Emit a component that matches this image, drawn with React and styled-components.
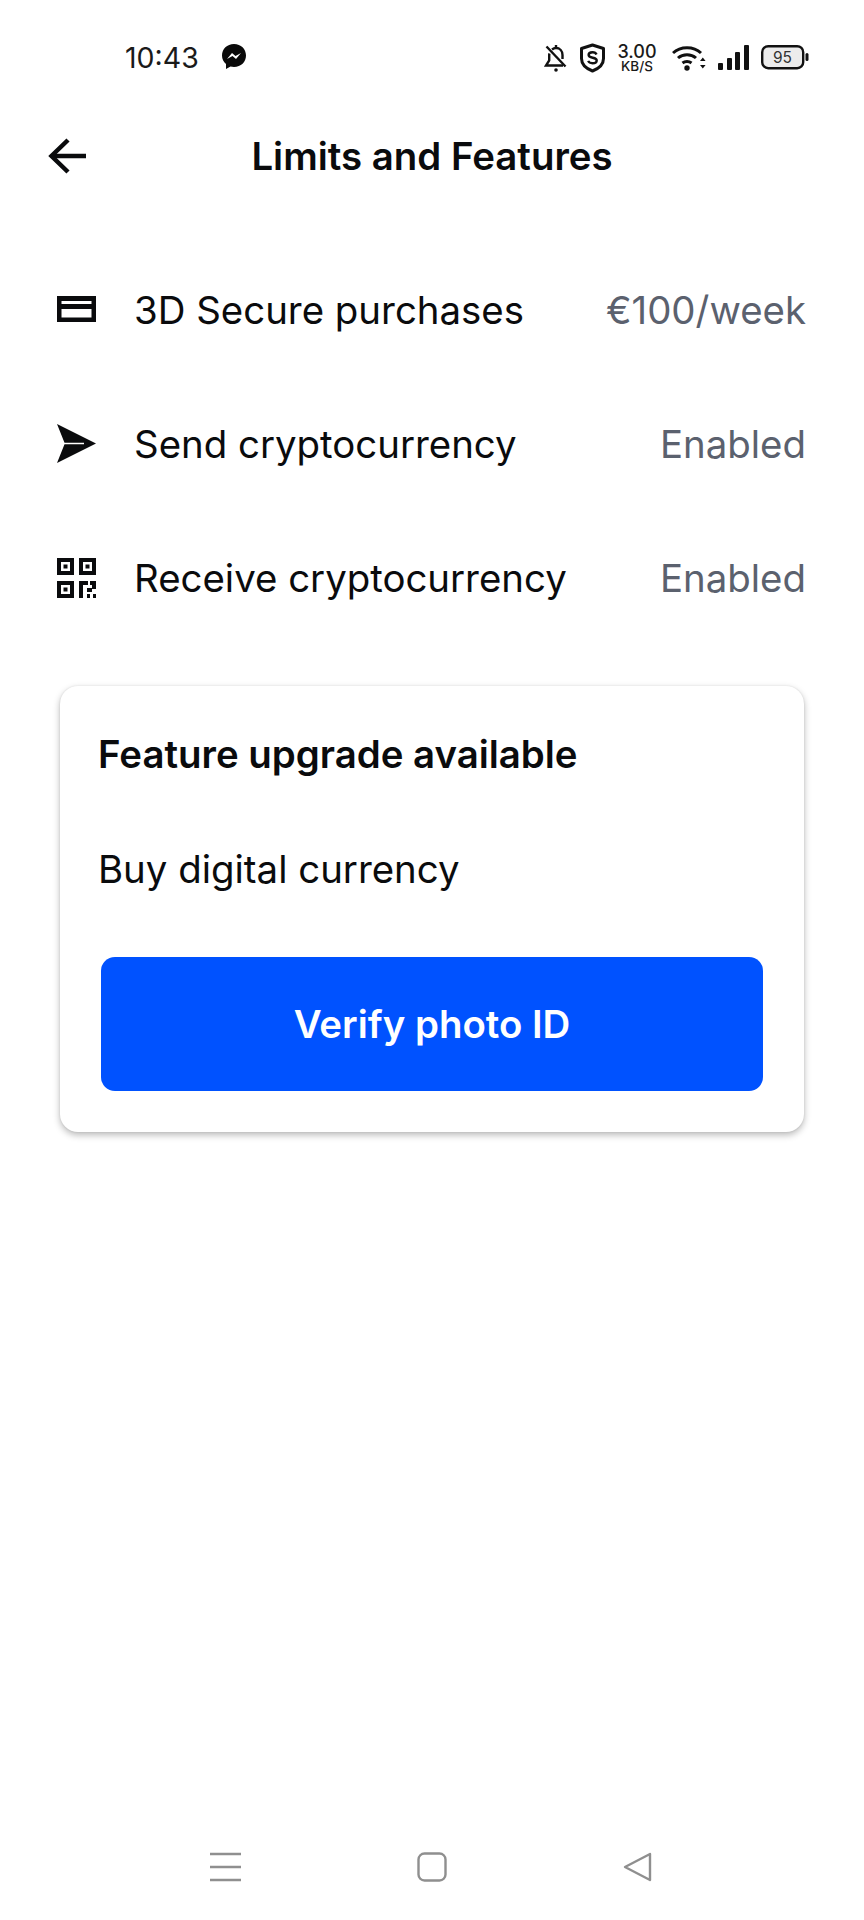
import React from 'react';
import styled, { createGlobalStyle } from 'styled-components';

const GlobalStyle = createGlobalStyle`
  html, body {
    margin: 0;
    padding: 0;
    background: #fff;
  }
  * {
    box-sizing: border-box;
  }
`;

const Page = styled.div`
  display: flex;
  flex-direction: column;
  width: 864px;
  height: 1920px;
  background: #fff;
  color: #0a0b0d;
  font-family: Inter, "Liberation Sans", sans-serif;
`;

const StatusBar = styled.div`
  display: flex;
  align-items: center;
  justify-content: space-between;
  height: 114px;
  padding: 0 55px 0 125px;
`;

const StatusLeft = styled.div`
  display: flex;
  align-items: center;
  gap: 22px;
`;

const Clock = styled.span`
  font-size: 28.5px;
  font-weight: 400;
  color: #1a1a1a;
`;

const StatusRight = styled.div`
  display: flex;
  align-items: center;
  gap: 12px;
  padding-top: 2px;
`;

const Speed = styled.div`
  display: flex;
  flex-direction: column;
  align-items: center;
  width: 40px;
  margin: 0 3px 0 -1px;
  color: #1a1a1a;
  font-weight: 500;
`;

const SpeedValue = styled.span`
  font-size: 18px;
  line-height: 16px;
`;

const SpeedUnit = styled.span`
  font-size: 13.5px;
  line-height: 13px;
`;

const Header = styled.header`
  display: flex;
  align-items: center;
  justify-content: center;
  position: relative;
  height: 84px;
`;

const BackButton = styled.div`
  position: absolute;
  left: 48px;
  top: 24px;
  display: flex;
`;

const Title = styled.h1`
  margin: 0;
  font-size: 38.4px;
  font-weight: 600;
`;

const List = styled.div`
  display: flex;
  flex-direction: column;
  margin-top: 45px;
  padding: 0 58px 0 57px;
`;

const Row = styled.div`
  display: flex;
  align-items: center;
  height: 134px;
`;

const RowIcon = styled.div`
  display: flex;
  width: 77px;
  flex: none;
`;

const RowLabel = styled.span`
  flex: 1;
  font-size: 38.4px;
  font-weight: 400;
`;

const RowValue = styled.span`
  font-size: 38.4px;
  font-weight: 400;
  color: #5b616e;
`;

const Card = styled.section`
  display: flex;
  flex-direction: column;
  height: 446px;
  margin: 41px 60px 0;
  padding: 46px 41px 41px 38px;
  border-radius: 18px;
  background: #fff;
  box-shadow: 0 3px 7px rgba(0, 0, 0, 0.28), 0 0 2px rgba(0, 0, 0, 0.1);
`;

const CardTitle = styled.h2`
  margin: 0;
  font-size: 38.4px;
  line-height: 44px;
  font-weight: 600;
`;

const CardText = styled.p`
  margin: 71px 0 0;
  font-size: 38.4px;
  line-height: 44px;
  font-weight: 400;
`;

const VerifyButton = styled.button`
  height: 134px;
  margin-top: auto;
  margin-left: 3px;
  border: 0;
  border-radius: 14px;
  background: #0052ff;
  color: #fff;
  font-family: inherit;
  font-size: 38.4px;
  font-weight: 600;
`;

const NavBar = styled.nav`
  display: flex;
  align-items: center;
  justify-content: space-between;
  height: 70px;
  margin-top: auto;
  margin-bottom: 18px;
  padding: 0 211px 0 210px;
`;

const BellOffIcon = () => (
  <svg width="23" height="28" viewBox="0 0 23 28" fill="none" stroke="#111" strokeWidth="2.400">
    <path d="M8 5.500c1-.8 2.500-1.500 4-1.500 3.800 0 6.500 3 6.500 7v4" />
    <path d="M5.500 9.500c-.2.500-.3 1-.3 1.500v5.500L2 21.500h17" />
    <path d="M2.500 2.500l19 20" />
    <path d="M12 1v3" />
    <circle cx="12" cy="26" r="1.800" fill="#111" stroke="none" />
  </svg>
);

const ShieldIcon = () => (
  <svg width="27" height="30" viewBox="0 0 27 30" fill="none">
    <path d="M13.500 2l11 3.500v10c0 6-4.500 10-11 12.500-6.500-2.500-11-6.500-11-12.500v-10z" stroke="#111" strokeWidth="3" strokeLinejoin="round" />
    <path d="M17.500 11.500c-.6-1.500-2-2.200-4-2.200-2.300 0-3.900 1-3.900 2.700 0 3.800 8.100 1.700 8.100 5.400 0 1.800-1.700 2.800-4.200 2.800-2.100 0-3.700-.8-4.300-2.300" stroke="#111" strokeWidth="2.400" />
  </svg>
);

const WifiIcon = () => (
  <svg width="34" height="26" viewBox="0 0 34 26" fill="none" stroke="#111" strokeWidth="3">
    <path d="M1 8c7.500-7 20.500-7 28 0" />
    <path d="M6 13c5-4.500 13-4.500 18 0" />
    <path d="M10.500 18c2.500-2 6.500-2 9 0" />
    <circle cx="15" cy="23" r="2.700" fill="#111" stroke="none" />
    <path d="M28 16l2.800-3.500 2.800 3.500zM28 20l2.800 3.500 2.800-3.500z" fill="#111" stroke="none" />
  </svg>
);

const SignalIcon = () => (
  <svg width="31" height="26" viewBox="0 0 31 26" fill="#111">
    <rect x="0" y="18" width="5" height="7" rx="1" />
    <rect x="9" y="13" width="5" height="12" rx="1" />
    <rect x="17" y="7" width="5" height="18" rx="1" />
    <rect x="26" y="0" width="5" height="25" rx="1" />
  </svg>
);

const BatteryIcon = () => (
  <svg width="48" height="26" viewBox="0 0 48 26">
    <rect x="1.200" y="1.200" width="41" height="22" rx="6" fill="#ececec" stroke="#111" strokeWidth="2.400" />
    <rect x="44.500" y="8" width="3" height="8" rx="1.500" fill="#111" />
    <text x="21.500" y="18" textAnchor="middle" fontSize="15.500" fontFamily="Inter, sans-serif" fill="#333">95</text>
  </svg>
);

const MessengerIcon = () => (
  <svg width="26" height="28" viewBox="0 0 26 28">
    <path d="M13 1C6 1 1 6 1 12.500c0 3.500 1.500 6.500 4 8.500v5l4.500-2.500c1.100.3 2.300.5 3.500.5 7 0 12-5 12-11.500S20 1 13 1z" fill="#0a0a0a" />
    <path d="M6 16l5-6 3.500 3 5.500-3-5 6-3.500-3z" fill="#fff" />
  </svg>
);

const BackArrow = () => (
  <svg width="40" height="36" viewBox="0 0 40 36" fill="none" stroke="#0a0b0d" strokeWidth="4.500">
    <path d="M38 18H4" />
    <path d="M20 2L3.500 18 20 34" />
  </svg>
);

const CardIcon = () => (
  <svg width="39" height="28" viewBox="0 0 39 28">
    <path fillRule="evenodd" d="M0 0h39v26H0zM4.500 5v3h30V5zM4.500 13v8.500h30V13z" fill="#0a0b0d" />
  </svg>
);

const SendIcon = () => (
  <svg width="39" height="41" viewBox="0 0 39 41">
    <path d="M0 0L39 19.500 0 39 7.500 20.300H27V18.700H7.500z" fill="#0a0b0d" />
  </svg>
);

const QrIcon = () => (
  <svg width="39" height="40" viewBox="0 0 39 40" fill="#0a0b0d">
    <path fillRule="evenodd" d="M0 0h17v17H0zM4 4v9h9V4zM22 0h17v17H22zM26 4v9h9V4zM0 23h17v17H0zM4 27v9h9v-9z" />
    <rect x="6.500" y="6.500" width="4" height="4" />
    <rect x="28.500" y="6.500" width="4" height="4" />
    <rect x="6.500" y="29.500" width="4" height="4" />
    <path d="M22 23h9v4h-5v13h-4zM33 23h6v8h-4v-4h-2zM30 30h5v4h-5zM30 36h3v4h-3zM36 36h3v4h-3z" />
  </svg>
);

const MenuKey = () => (
  <svg width="31" height="30" viewBox="0 0 31 30" stroke="#8f8f8f" strokeWidth="2.400">
    <path d="M0 2h31M0 15h31M0 28h31" />
  </svg>
);

const HomeKey = () => (
  <svg width="30" height="30" viewBox="0 0 30 30" fill="none" stroke="#8f8f8f" strokeWidth="2.400">
    <rect x="1.500" y="1.500" width="27" height="27" rx="6" />
  </svg>
);

const BackKey = () => (
  <svg width="30" height="30" viewBox="0 0 30 30" fill="none" stroke="#8f8f8f" strokeWidth="2.400" strokeLinejoin="round">
    <path d="M27 2L2 15l25 13z" />
  </svg>
);

const rows = [
  { icon: <CardIcon />, label: '3D Secure purchases', value: '€100/week' },
  { icon: <SendIcon />, label: 'Send cryptocurrency', value: 'Enabled' },
  { icon: <QrIcon />, label: 'Receive cryptocurrency', value: 'Enabled' },
];

function App() {
  return (
    <Page>
      <GlobalStyle />
      <StatusBar>
        <StatusLeft>
          <Clock>10:43</Clock>
          <MessengerIcon />
        </StatusLeft>
        <StatusRight>
          <BellOffIcon />
          <ShieldIcon />
          <Speed>
            <SpeedValue>3.00</SpeedValue>
            <SpeedUnit>KB/S</SpeedUnit>
          </Speed>
          <WifiIcon />
          <SignalIcon />
          <BatteryIcon />
        </StatusRight>
      </StatusBar>
      <Header>
        <BackButton><BackArrow /></BackButton>
        <Title>Limits and Features</Title>
      </Header>
      <List>
        {rows.map((row) => (
          <Row key={row.label}>
            <RowIcon>{row.icon}</RowIcon>
            <RowLabel>{row.label}</RowLabel>
            <RowValue>{row.value}</RowValue>
          </Row>
        ))}
      </List>
      <Card>
        <CardTitle>Feature upgrade available</CardTitle>
        <CardText>Buy digital currency</CardText>
        <VerifyButton>Verify photo ID</VerifyButton>
      </Card>
      <NavBar>
        <MenuKey />
        <HomeKey />
        <BackKey />
      </NavBar>
    </Page>
  );
}

export default App;
